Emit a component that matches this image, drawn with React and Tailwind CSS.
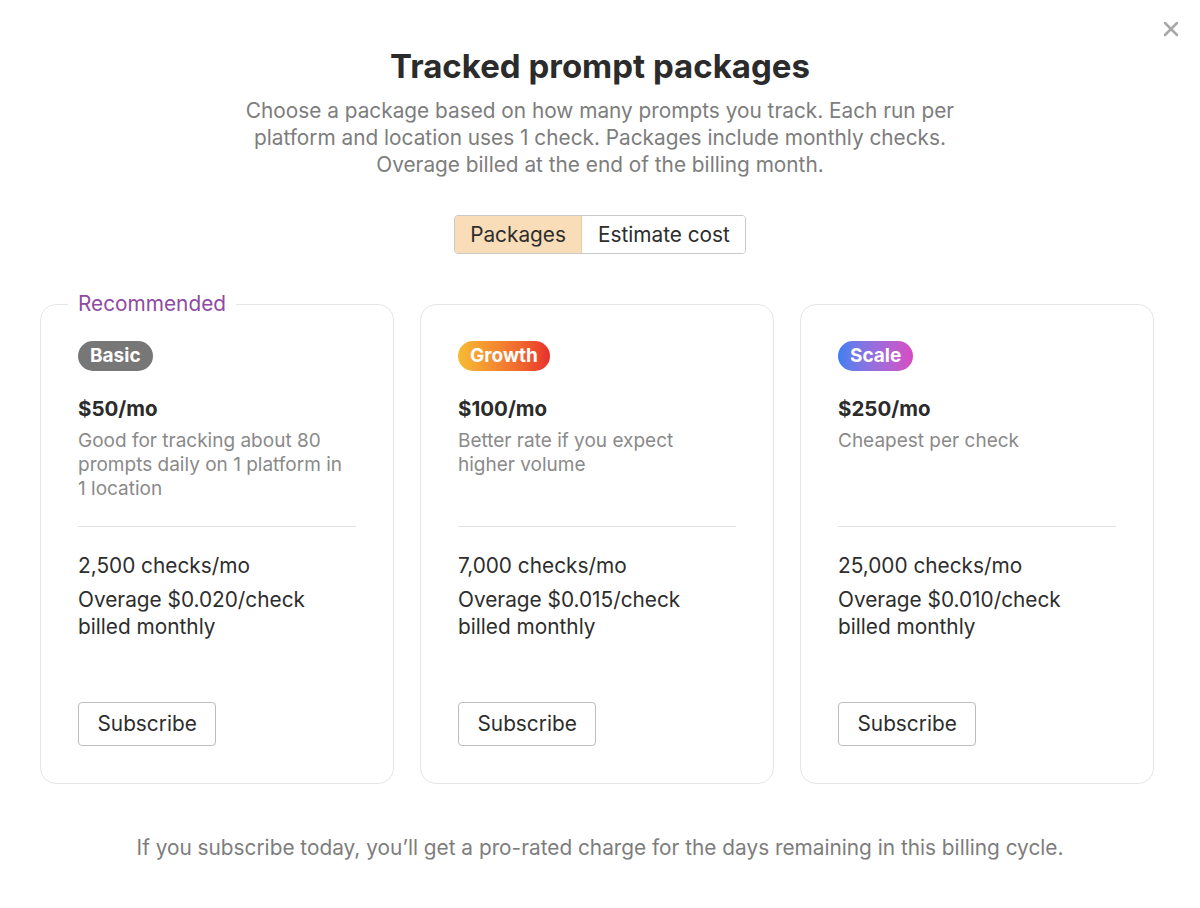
import { X } from "lucide-react";

const plans = [
  {
    name: "Basic",
    badge: "bg-[#777777]",
    price: "$50/mo",
    desc: "Good for tracking about 80 prompts daily on 1 platform in 1 location",
    checks: "2,500 checks/mo",
    overage: "Overage $0.020/check billed monthly",
    recommended: true,
  },
  {
    name: "Growth",
    badge: "bg-gradient-to-r from-[#f6bb33] to-[#e82d2b]",
    price: "$100/mo",
    desc: "Better rate if you expect higher volume",
    checks: "7,000 checks/mo",
    overage: "Overage $0.015/check billed monthly",
  },
  {
    name: "Scale",
    badge: "bg-gradient-to-r from-[#3b7ff2] to-[#d64ac4]",
    price: "$250/mo",
    desc: "Cheapest per check",
    checks: "25,000 checks/mo",
    overage: "Overage $0.010/check billed monthly",
  },
];

function PlanCard({ plan }) {
  return (
    <fieldset className="flex flex-col rounded-[16px] border border-[#e6e6e6] px-[37px] pt-[24px] pb-[37px] min-w-0">
      {plan.recommended ? (
        <legend className="ml-[-10px] px-[10px] text-[20.8px] leading-[26px] text-[#8f4aa3]">
          Recommended
        </legend>
      ) : (
        <legend className="h-[26px] w-0 p-0" />
      )}
      <div className="flex">
        <span
          className={`${plan.badge} rounded-full px-[12px] h-[30px] flex items-center text-[19px] font-bold text-white`}
        >
          {plan.name}
        </span>
      </div>
      <div className="mt-[24px] text-[20.5px] leading-[28px] font-bold text-[#2b2b2b]">
        {plan.price}
      </div>
      <p className="mt-[6px] min-h-[72px] pr-[6px] text-[19px] leading-[24px] text-[#8a8a8a]">
        {plan.desc}
      </p>
      <div className="mt-[25px] border-t border-[#e3e3e3]" />
      <div className="mt-[25px] text-[20.8px] leading-[27px] text-[#2d2d2d]">{plan.checks}</div>
      <div className="mt-[7px] text-[20.8px] leading-[27px] text-[#2d2d2d] pr-[40px]">
        {plan.overage}
      </div>
      <div className="mt-[62px] flex">
        <button className="h-[44px] px-[18.5px] rounded-[4px] border border-[#bdbdbd] bg-white text-[20.8px] text-[#2d2d2d]">
          Subscribe
        </button>
      </div>
    </fieldset>
  );
}

export default function App() {
  return (
    <div
      className="relative min-h-[908px] w-[1200px] bg-white"
      style={{ fontFamily: "Inter, 'Noto Sans', sans-serif" }}
    >
      <button className="absolute right-[17px] top-[17px] text-[#a8a8a8]">
        <X size={24} strokeWidth={2.5} />
      </button>
      <div className="flex flex-col items-center pt-[46px]">
        <h1 className="text-[33px] leading-[40px] font-bold text-[#2b2b2b]">
          Tracked prompt packages
        </h1>
        <p className="mt-[11px] w-[740px] text-center text-[20.8px] leading-[27px] text-[#7d7d7d]">
          Choose a package based on how many prompts you track. Each run per platform and
          location uses 1 check. Packages include monthly checks. Overage billed at the end of
          the billing month.
        </p>
        <div className="mt-[37px] flex h-[39px] rounded-[4px] border border-[#c9c9c9] overflow-hidden text-[20.8px] text-[#2d2d2d]">
          <button className="px-[15.5px] bg-[#f9ddb8] border-r border-[#e9cfa9]">Packages</button>
          <button className="px-[15.5px] bg-white">Estimate cost</button>
        </div>
      </div>
      <div className="mt-[37px] grid grid-cols-3 gap-[26px] px-[40px] pr-[46px]">
        {plans.map((p) => (
          <PlanCard key={p.name} plan={p} />
        ))}
      </div>
      <p className="mt-[50px] text-center text-[20.8px] leading-[27px] text-[#7d7d7d]">
        If you subscribe today, you’ll get a pro-rated charge for the days remaining in this
        billing cycle.
      </p>
    </div>
  );
}
